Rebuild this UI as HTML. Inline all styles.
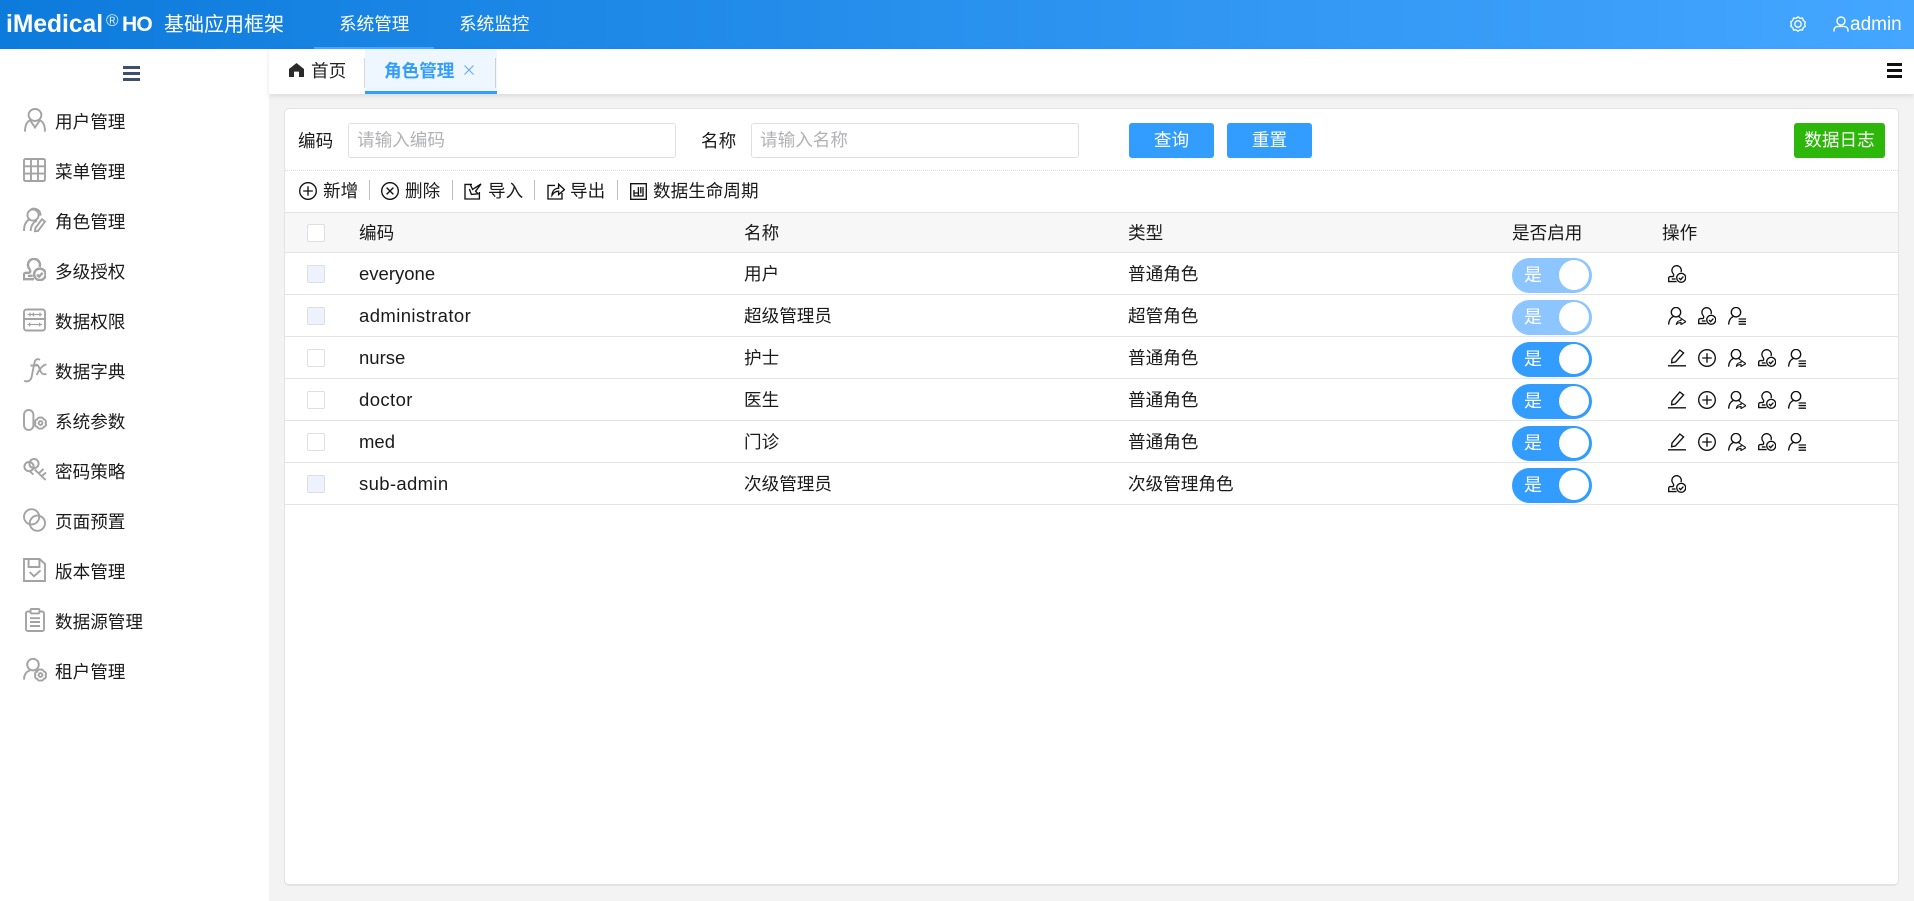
<!DOCTYPE html>
<html lang="zh-CN"><head><meta charset="utf-8"><title>角色管理</title>
<style>
html,body{margin:0;padding:0;width:1914px;height:901px;overflow:hidden;background:#f3f3f3}
body{position:relative;font-family:"Liberation Sans","Noto Sans CJK SC",sans-serif;font-size:17.6px;color:#1a1a1a}
.a{position:absolute}
.t{position:absolute;white-space:nowrap;line-height:24px;height:24px}
.l{font-size:18.5px}
svg{position:absolute;overflow:visible;fill:none}
.g{stroke:#a3a3a3;stroke-width:1.9}
.k{stroke:#111;stroke-width:1.35}
.w{background:#fff;position:absolute}
.ln{position:absolute;height:1px;left:285px;width:1613px;background:#e4e4e4}
.cb{position:absolute;left:307px;width:16px;height:16px;border:1px solid #dcdfe6;border-radius:2px;background:#fff}
.cb.d{background:#edf2fc}
.sw{position:absolute;left:1512px;width:80px;height:35px;border-radius:18px;background:#339dff}
.sw.d{background:#8cc5ff}
.sw i{position:absolute;left:47px;top:2px;width:30px;height:30px;border-radius:50%;background:#fff}
.sw b{position:absolute;left:12px;top:5px;font-weight:400;font-size:18px;line-height:24px;color:#fff}
.sep{position:absolute;width:1px;height:20px;top:180px;background:#bdbdbd}
.inp{position:absolute;top:123px;height:33px;border:1px solid #dcdfe6;border-radius:3px;background:#fff;color:#b0b2b6;line-height:33px;padding-left:8px;box-sizing:content-box}
.btn{position:absolute;top:123px;height:35px;border-radius:3px;background:#339dff;color:#fff;text-align:center;line-height:35px}
</style></head><body>
<svg width="0" height="0" style="position:absolute"><defs>
<symbol id="edit" viewBox="0 0 18 18"><path d="M0 16.8H18"/><path d="M3.6 13.8 4 10 11.8 1 15.6 4 7.4 13Z"/></symbol>
<symbol id="plus" viewBox="0 0 18 18"><circle cx="9" cy="9" r="8.3"/><path d="M9 4.2V13.8M4.2 9H13.8"/></symbol>
<symbol id="minus" viewBox="0 0 18 18"><circle cx="9" cy="9" r="8.3"/><path d="M5.6 5.6 12.4 12.4M12.4 5.6 5.6 12.4"/></symbol>
<symbol id="ushare" viewBox="0 0 18 18"><circle cx="8" cy="5.2" r="4.7"/><path d="M.6 17.6C.8 13.6 2.6 10.8 5.4 9.4"/><path d="M10.6 9.4C11.2 9.8 11.8 10.2 12.2 10.8"/><path d="M8.4 17.4C8.6 15 10.4 13.6 13 13.5V11.4L18 14.6 13 17.6V15.6C11.2 15.6 9.6 16 8.4 17.4Z" stroke-width="1.1"/></symbol>
<symbol id="ucheck" viewBox="0 0 18 18"><path d="M5.6 9A4.7 4.7 0 1 1 13 7"/><path d="M5.6 9V10.6C5.6 11.2 5 11.6 4 11.6H2.4C1.4 11.6 .7 12.2 .7 13.2V16.6H8.6"/><path d="M3.8 14H7.6"/><circle cx="13.2" cy="12.8" r="4.5"/><path d="M11 13 12.6 14.6 15.4 11.6"/></symbol>
<symbol id="ulist" viewBox="0 0 18 18"><circle cx="8" cy="5.2" r="4.7"/><path d="M.6 17.6C.8 13.6 2.6 10.8 5.4 9.4"/><path d="M10.6 12H18M10.6 14.6H18M10.6 17.2H18"/></symbol>
<symbol id="imp" viewBox="0 0 18 18"><path d="M8 2.4H1V17H15.4V10"/><path d="M6 2 8.6 7.4 17 2 11.6 9.2 14 11.8 7.4 12.4 5.4 7"/></symbol>
<symbol id="exp" viewBox="0 0 18 18"><path d="M8 3.4H1V17H15V11"/><path d="M5 13.2C5.2 8.6 8 6.4 11.6 6.2V2.2L17.4 7.6 11.6 12.6V9.2C9 9.2 6.8 10.4 5 13.2Z"/></symbol>
<symbol id="life" viewBox="0 0 17 17"><path d="M.7 .7H16.3V16.3H.7Z"/><path d="M4 7V13H13V4M4 10H8.4M8.4 4V13M10.8 4V10.4"/></symbol>
</defs></svg>

<!-- header -->
<div class="a" style="left:0;top:0;width:1914px;height:49px;background:linear-gradient(90deg,#0d7bdc,#44a6ff)"></div>
<div class="t" style="left:6px;top:12px;font-size:24.6px;font-weight:700;color:#fff;line-height:26px;height:26px">iMedical</div>
<div class="t" style="left:106px;top:9px;font-size:17px;color:#dbeeff">®</div>
<div class="t" style="left:122px;top:12px;font-size:21px;font-weight:700;color:#fff;line-height:26px;height:26px;letter-spacing:-.8px">HO</div>
<div class="t" style="left:164px;top:13px;font-size:20px;color:#fff">基础应用框架</div>
<div class="a" style="left:314px;top:47px;width:120px;height:2px;background:#46a7ff"></div>
<div class="t" style="left:339px;top:12px;color:#fff">系统管理</div>
<div class="t" style="left:459px;top:12px;color:#fff">系统监控</div>
<svg style="left:1790px;top:16px" width="16" height="16" viewBox="0 0 16 16" stroke="#fff" stroke-width="1.3"><path d="M8 .8 10 2.3 12.5 2.1 13.3 4.5 15.3 6 14.6 8.4 15.3 10.4 13.3 11.6 12.5 14 10 13.8 8 15.2 6 13.8 3.5 14 2.7 11.6.7 10.4 1.4 8.4.7 6 2.7 4.5 3.5 2.1 6 2.3Z"/><circle cx="8" cy="8" r="3.2"/></svg>
<svg style="left:1833px;top:16px" width="16" height="16" viewBox="0 0 16 16" stroke="#fff" stroke-width="1.4"><circle cx="8" cy="5" r="4"/><path d="M1 15.6V14.4C1 11.6 3 10.4 5 10.4H11C13 10.4 15 11.6 15 14.4V15.6"/></svg>
<div class="t" style="left:1850px;top:13px;color:#fff;font-size:19px">admin</div>

<!-- sidebar + tabs -->
<div class="w" style="left:0;top:49px;width:269px;height:852px"></div>
<div class="w" style="left:269px;top:49px;width:1645px;height:45px;box-shadow:0 2px 5px rgba(0,0,0,.1)"></div>
<div class="a" style="left:123px;top:66px;width:17px;height:3px;background:#3f4f6d"></div>
<div class="a" style="left:123px;top:72px;width:17px;height:3px;background:#3f4f6d"></div>
<div class="a" style="left:123px;top:78px;width:17px;height:3px;background:#3f4f6d"></div>

<svg style="left:289px;top:63px" width="15" height="14" viewBox="0 0 15 14"><path fill="#2a2a2a" d="M7.5 0 15 6V14H10V8.6H5V14H0V6Z"/></svg>
<div class="t" style="left:311px;top:59px;color:#222">首页</div>
<div class="a" style="left:364px;top:58px;width:1px;height:30px;background:#d8d8d8"></div>
<div class="a" style="left:365px;top:49px;width:132px;height:42px;background:#eef7ff"></div>
<div class="a" style="left:365px;top:91px;width:132px;height:3px;background:#339dff"></div>
<div class="a" style="left:495px;top:58px;width:1px;height:30px;background:#d0d0d0"></div>
<div class="t" style="left:384px;top:59px;color:#339dff;font-weight:700">角色管理</div>
<svg style="left:464px;top:65px" width="10" height="10" viewBox="0 0 10 10" stroke="#5aa9f5" stroke-width="1"><path d="M.5 .5 9.5 9.5M9.5 .5 .5 9.5"/></svg>
<div class="a" style="left:1887px;top:63px;width:15px;height:3px;background:#111"></div>
<div class="a" style="left:1887px;top:69px;width:15px;height:3px;background:#111"></div>
<div class="a" style="left:1887px;top:75px;width:15px;height:3px;background:#111"></div>

<!-- sidebar menu -->
<div class="t" style="left:55px;top:110px">用户管理</div>
<div class="t" style="left:55px;top:160px">菜单管理</div>
<div class="t" style="left:55px;top:210px">角色管理</div>
<div class="t" style="left:55px;top:260px">多级授权</div>
<div class="t" style="left:55px;top:310px">数据权限</div>
<div class="t" style="left:55px;top:360px">数据字典</div>
<div class="t" style="left:55px;top:410px">系统参数</div>
<div class="t" style="left:55px;top:460px">密码策略</div>
<div class="t" style="left:55px;top:510px">页面预置</div>
<div class="t" style="left:55px;top:560px">版本管理</div>
<div class="t" style="left:55px;top:610px">数据源管理</div>
<div class="t" style="left:55px;top:660px">租户管理</div>

<svg class="g" style="left:24px;top:108px" width="22" height="24" viewBox="0 0 22 24"><ellipse cx="11" cy="7" rx="6.4" ry="6"/><path d="M6.6 12C3 13.4 1 16.6 1 23.6M15.4 12C19 13.4 21 16.6 21 23.6M6.6 13 11 19.5 15.4 13"/></svg>
<svg class="g" style="left:23px;top:158px" width="23" height="24" viewBox="0 0 23 24"><rect x="1" y="1" width="21" height="22" rx="1.5"/><path d="M8 1V23M15 1V23M1 8.3H22M1 15.6H22"/></svg>
<svg class="g" style="left:23px;top:208px" width="23" height="24" viewBox="0 0 23 24"><circle cx="10" cy="7" r="5.6"/><path d="M7.5 2C8.6 .6 11 .4 13 1 16 1.8 17.8 4.4 17.4 7.6"/><path d="M6 11.5C2.8 13.4 1 17 1 23M14 12.6C10.4 14 8 17.6 7.6 23M15 23 22 13.6 19 11.2 12.4 20 12 23.2Z"/></svg>
<svg class="g" style="left:23px;top:258px" width="23" height="23" viewBox="0 0 18 18" stroke-width="1.5"><use href="#ucheck"/></svg>
<svg class="g" style="left:23px;top:308px" width="23" height="24" viewBox="0 0 23 24"><rect x="1" y="1.5" width="21" height="21" rx="2.5"/><path d="M1 11H22"/><path d="M4.5 6.5H19M7 4.6V8.4M10.4 4.6V8.4M17 4.6V8.4M4.5 16.5H19M6.6 14.6V18.4M16.6 14.6V18.4" stroke-width="1.3"/></svg>
<svg class="g" style="left:23px;top:358px" width="24" height="24" viewBox="0 0 24 24" stroke-width="1.5"><path d="M17 1.8C14 .4 12 1.4 11.4 5L8.6 19C7.8 23 4.6 24 1 23M7.4 7.5H15.4M12.6 6.6C15.6 6.6 16 9.4 17 12 18 15 19.4 17 23.4 16M23.4 6.4C20 6.8 17 10 13.6 17"/></svg>
<svg class="g" style="left:23px;top:408px" width="24" height="24" viewBox="0 0 24 24"><rect x="1" y="2" width="9.4" height="20" rx="4.7"/><path d="M17.5 9.6C19 9.2 20.6 10.2 20.8 11.4 22.4 11.6 23.6 13.4 22.6 15 23.6 16.6 22.6 18.6 20.8 18.8 20 20.6 18.6 21 17.5 20.4 16.4 21 15 20.6 14.2 18.8 12.4 18.6 11.4 16.6 12.4 15 11.4 13.4 12.6 11.6 14.2 11.4 14.4 10.2 16 9.2 17.5 9.6Z"/><circle cx="17.5" cy="15" r="1.9"/></svg>
<svg class="g" style="left:23px;top:458px" width="24" height="24" viewBox="0 0 24 24"><circle cx="6" cy="8.6" r="4.6"/><circle cx="11" cy="5.6" r="4.6"/><path d="M11.6 11.4 22.6 22M15.6 15.4 20.6 10.8M18.6 18.4 23 14.4M6.6 13.2 10.4 16.6"/></svg>
<svg class="g" style="left:23px;top:508px" width="23" height="24" viewBox="0 0 23 24"><circle cx="8.6" cy="8.8" r="7.6"/><circle cx="14.4" cy="15.2" r="7.6"/></svg>
<svg class="g" style="left:23px;top:558px" width="23" height="24" viewBox="0 0 23 24"><path d="M1 1H16.6L22 6V23H1Z"/><path d="M5.6 1V9H16.4V1"/><path d="M6.6 14 11 18.2 17.6 12.4"/></svg>
<svg class="g" style="left:25px;top:608px" width="20" height="24" viewBox="0 0 20 24"><rect x="1" y="3.5" width="18" height="19.5" rx="1.8"/><rect x="5.6" y="1" width="8.8" height="4.4" rx="1" fill="#fff"/><path d="M5 10.2H15M5 14H15M5 18H15"/></svg>
<svg class="g" style="left:23px;top:658px" width="24" height="24" viewBox="0 0 24 24"><circle cx="10" cy="6.6" r="5.8"/><path d="M7 12.4C3.4 13.6 1 16.4 1 21.6M12.6 13C13.4 13.4 14 13.8 14.6 14.4"/><path d="M17.5 11.6C19 11.2 20.6 12.2 20.8 13.4 22.4 13.6 23.6 15.4 22.6 17 23.6 18.6 22.6 20.6 20.8 20.8 20 22.6 18.6 23 17.5 22.4 16.4 23 15 22.6 14.2 20.8 12.4 20.6 11.4 18.6 12.4 17 11.4 15.4 12.6 13.6 14.2 13.4 14.4 12.2 16 11.2 17.5 11.6Z"/><circle cx="17.5" cy="17" r="1.9"/></svg>

<!-- card -->
<div class="w" style="left:284px;top:108px;width:1613px;height:775px;border:1px solid #e3e3e3;border-bottom:2px solid #e3e3e3;border-radius:5px"></div>
<div class="t" style="left:298px;top:129px">编码</div>
<div class="inp" style="left:348px;width:318px">请输入编码</div>
<div class="t" style="left:701px;top:129px">名称</div>
<div class="inp" style="left:751px;width:318px">请输入名称</div>
<div class="btn" style="left:1129px;width:85px">查询</div>
<div class="btn" style="left:1227px;width:85px">重置</div>
<div class="btn" style="left:1794px;width:91px;background:#2db70a">数据日志</div>
<div class="a" style="left:285px;top:170px;width:1613px;height:0;border-top:1px dotted #d8d8d8"></div>

<!-- toolbar -->
<svg class="k" style="left:299px;top:182px" width="18" height="18"><use href="#plus"/></svg>
<div class="t" style="left:323px;top:179px">新增</div>
<div class="sep" style="left:369px"></div>
<svg class="k" style="left:381px;top:182px" width="18" height="18"><use href="#minus"/></svg>
<div class="t" style="left:405px;top:179px">删除</div>
<div class="sep" style="left:452px"></div>
<svg class="k" style="left:464px;top:182px" width="18" height="18"><use href="#imp"/></svg>
<div class="t" style="left:488px;top:179px">导入</div>
<div class="sep" style="left:534px"></div>
<svg class="k" style="left:547px;top:182px" width="18" height="18"><use href="#exp"/></svg>
<div class="t" style="left:570px;top:179px">导出</div>
<div class="sep" style="left:617px"></div>
<svg class="k" style="left:630px;top:183px" width="17" height="17"><use href="#life"/></svg>
<div class="t" style="left:653px;top:179px">数据生命周期</div>

<!-- table -->
<div class="a" style="left:285px;top:212px;width:1613px;height:40px;background:#f7f7f7"></div>
<div class="ln" style="top:212px"></div>
<div class="ln" style="top:252px"></div>
<div class="ln" style="top:294px"></div>
<div class="ln" style="top:336px"></div>
<div class="ln" style="top:378px"></div>
<div class="ln" style="top:420px"></div>
<div class="ln" style="top:462px"></div>
<div class="ln" style="top:504px"></div>

<div class="cb" style="top:224px"></div>
<div class="t" style="left:359px;top:221px">编码</div>
<div class="t" style="left:744px;top:221px">名称</div>
<div class="t" style="left:1128px;top:221px">类型</div>
<div class="t" style="left:1512px;top:221px">是否启用</div>
<div class="t" style="left:1662px;top:221px">操作</div>

<!-- row 1 -->
<div class="cb d" style="top:265px"></div>
<div class="t l" style="left:359px;top:262px">everyone</div>
<div class="t" style="left:744px;top:262px">用户</div>
<div class="t" style="left:1128px;top:262px">普通角色</div>
<div class="sw d" style="top:258px"><b>是</b><i></i></div>
<svg class="k" style="left:1668px;top:265px" width="18" height="18"><use href="#ucheck"/></svg>
<!-- row 2 -->
<div class="cb d" style="top:307px"></div>
<div class="t l" style="left:359px;top:304px;letter-spacing:.4px">administrator</div>
<div class="t" style="left:744px;top:304px">超级管理员</div>
<div class="t" style="left:1128px;top:304px">超管角色</div>
<div class="sw d" style="top:300px"><b>是</b><i></i></div>
<svg class="k" style="left:1668px;top:307px" width="18" height="18"><use href="#ushare"/></svg>
<svg class="k" style="left:1698px;top:307px" width="18" height="18"><use href="#ucheck"/></svg>
<svg class="k" style="left:1728px;top:307px" width="18" height="18"><use href="#ulist"/></svg>
<!-- row 3 -->
<div class="cb" style="top:349px"></div>
<div class="t l" style="left:359px;top:346px">nurse</div>
<div class="t" style="left:744px;top:346px">护士</div>
<div class="t" style="left:1128px;top:346px">普通角色</div>
<div class="sw" style="top:342px"><b>是</b><i></i></div>
<svg class="k" style="left:1668px;top:349px" width="18" height="18"><use href="#edit"/></svg>
<svg class="k" style="left:1698px;top:349px" width="18" height="18"><use href="#plus"/></svg>
<svg class="k" style="left:1728px;top:349px" width="18" height="18"><use href="#ushare"/></svg>
<svg class="k" style="left:1758px;top:349px" width="18" height="18"><use href="#ucheck"/></svg>
<svg class="k" style="left:1788px;top:349px" width="18" height="18"><use href="#ulist"/></svg>
<!-- row 4 -->
<div class="cb" style="top:391px"></div>
<div class="t l" style="left:359px;top:388px;letter-spacing:.4px">doctor</div>
<div class="t" style="left:744px;top:388px">医生</div>
<div class="t" style="left:1128px;top:388px">普通角色</div>
<div class="sw" style="top:384px"><b>是</b><i></i></div>
<svg class="k" style="left:1668px;top:391px" width="18" height="18"><use href="#edit"/></svg>
<svg class="k" style="left:1698px;top:391px" width="18" height="18"><use href="#plus"/></svg>
<svg class="k" style="left:1728px;top:391px" width="18" height="18"><use href="#ushare"/></svg>
<svg class="k" style="left:1758px;top:391px" width="18" height="18"><use href="#ucheck"/></svg>
<svg class="k" style="left:1788px;top:391px" width="18" height="18"><use href="#ulist"/></svg>
<!-- row 5 -->
<div class="cb" style="top:433px"></div>
<div class="t l" style="left:359px;top:430px">med</div>
<div class="t" style="left:744px;top:430px">门诊</div>
<div class="t" style="left:1128px;top:430px">普通角色</div>
<div class="sw" style="top:426px"><b>是</b><i></i></div>
<svg class="k" style="left:1668px;top:433px" width="18" height="18"><use href="#edit"/></svg>
<svg class="k" style="left:1698px;top:433px" width="18" height="18"><use href="#plus"/></svg>
<svg class="k" style="left:1728px;top:433px" width="18" height="18"><use href="#ushare"/></svg>
<svg class="k" style="left:1758px;top:433px" width="18" height="18"><use href="#ucheck"/></svg>
<svg class="k" style="left:1788px;top:433px" width="18" height="18"><use href="#ulist"/></svg>
<!-- row 6 -->
<div class="cb d" style="top:475px"></div>
<div class="t l" style="left:359px;top:472px;letter-spacing:.35px">sub-admin</div>
<div class="t" style="left:744px;top:472px">次级管理员</div>
<div class="t" style="left:1128px;top:472px">次级管理角色</div>
<div class="sw" style="top:468px"><b>是</b><i></i></div>
<svg class="k" style="left:1668px;top:475px" width="18" height="18"><use href="#ucheck"/></svg>
</body></html>
